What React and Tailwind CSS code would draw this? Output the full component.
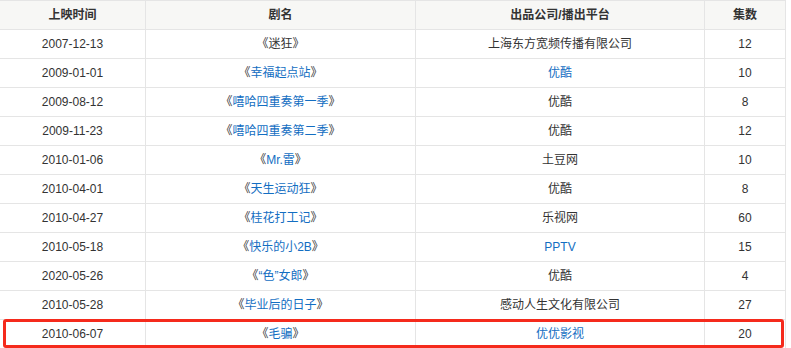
import React from "react";

const rows = [
  { d: "2007-12-13", t: "迷狂", tl: false, p: "上海东方宽频传播有限公司", pl: false, n: "12" },
  { d: "2009-01-01", t: "幸福起点站", tl: true, p: "优酷", pl: true, n: "10" },
  { d: "2009-08-12", t: "嘻哈四重奏第一季", tl: true, p: "优酷", pl: false, n: "8" },
  { d: "2009-11-23", t: "嘻哈四重奏第二季", tl: true, p: "优酷", pl: false, n: "12" },
  { d: "2010-01-06", t: "Mr.雷", tl: true, p: "土豆网", pl: false, n: "10" },
  { d: "2010-04-01", t: "天生运动狂", tl: true, p: "优酷", pl: false, n: "8" },
  { d: "2010-04-27", t: "桂花打工记", tl: true, p: "乐视网", pl: false, n: "60" },
  { d: "2010-05-18", t: "快乐的小2B", tl: true, p: "PPTV", pl: true, n: "15" },
  { d: "2020-05-26", t: "“色”女郎", tl: true, p: "优酷", pl: false, n: "4" },
  { d: "2010-05-28", t: "毕业后的日子", tl: true, p: "感动人生文化有限公司", pl: false, n: "27" },
  { d: "2010-06-07", t: "毛骗", tl: true, p: "优优影视", pl: true, n: "20" },
];

const grid = "grid grid-cols-[146px_270px_289px_81px] border-b border-[#e5e5e5]";
const cell = "h-[28px] flex items-center justify-center border-r border-[#e5e5e5]";

export default function App() {
  return (
    <div
      className="relative w-[791px] h-[348px] overflow-hidden bg-white text-[12px] text-[#333]"
      style={{ fontFamily: '"Liberation Sans", "Noto Sans CJK SC", sans-serif' }}
    >
      <div className="w-[786px] border-t border-[#e5e5e5]">
        <div className={grid + " bg-[#f7f7f5] font-bold"}>
          <div className={cell}>上映时间</div>
          <div className={cell}>剧名</div>
          <div className={cell}>出品公司/播出平台</div>
          <div className={cell}>集数</div>
        </div>
        {rows.map((r, i) => (
          <div key={i} className={grid}>
            <div className={cell}>{r.d}</div>
            <div className={cell}>
              <span>《</span>
              <span className={r.tl ? "text-[#136ec2]" : ""}>{r.t}</span>
              <span>》</span>
            </div>
            <div className={cell}>
              <span className={r.pl ? "text-[#136ec2]" : ""}>{r.p}</span>
            </div>
            <div className={cell}>{r.n}</div>
          </div>
        ))}
      </div>
      <div className="absolute left-[3px] top-[319px] w-[781px] h-[29px] border-[3px] border-[#f52a1c] rounded-[3px]" />
    </div>
  );
}
